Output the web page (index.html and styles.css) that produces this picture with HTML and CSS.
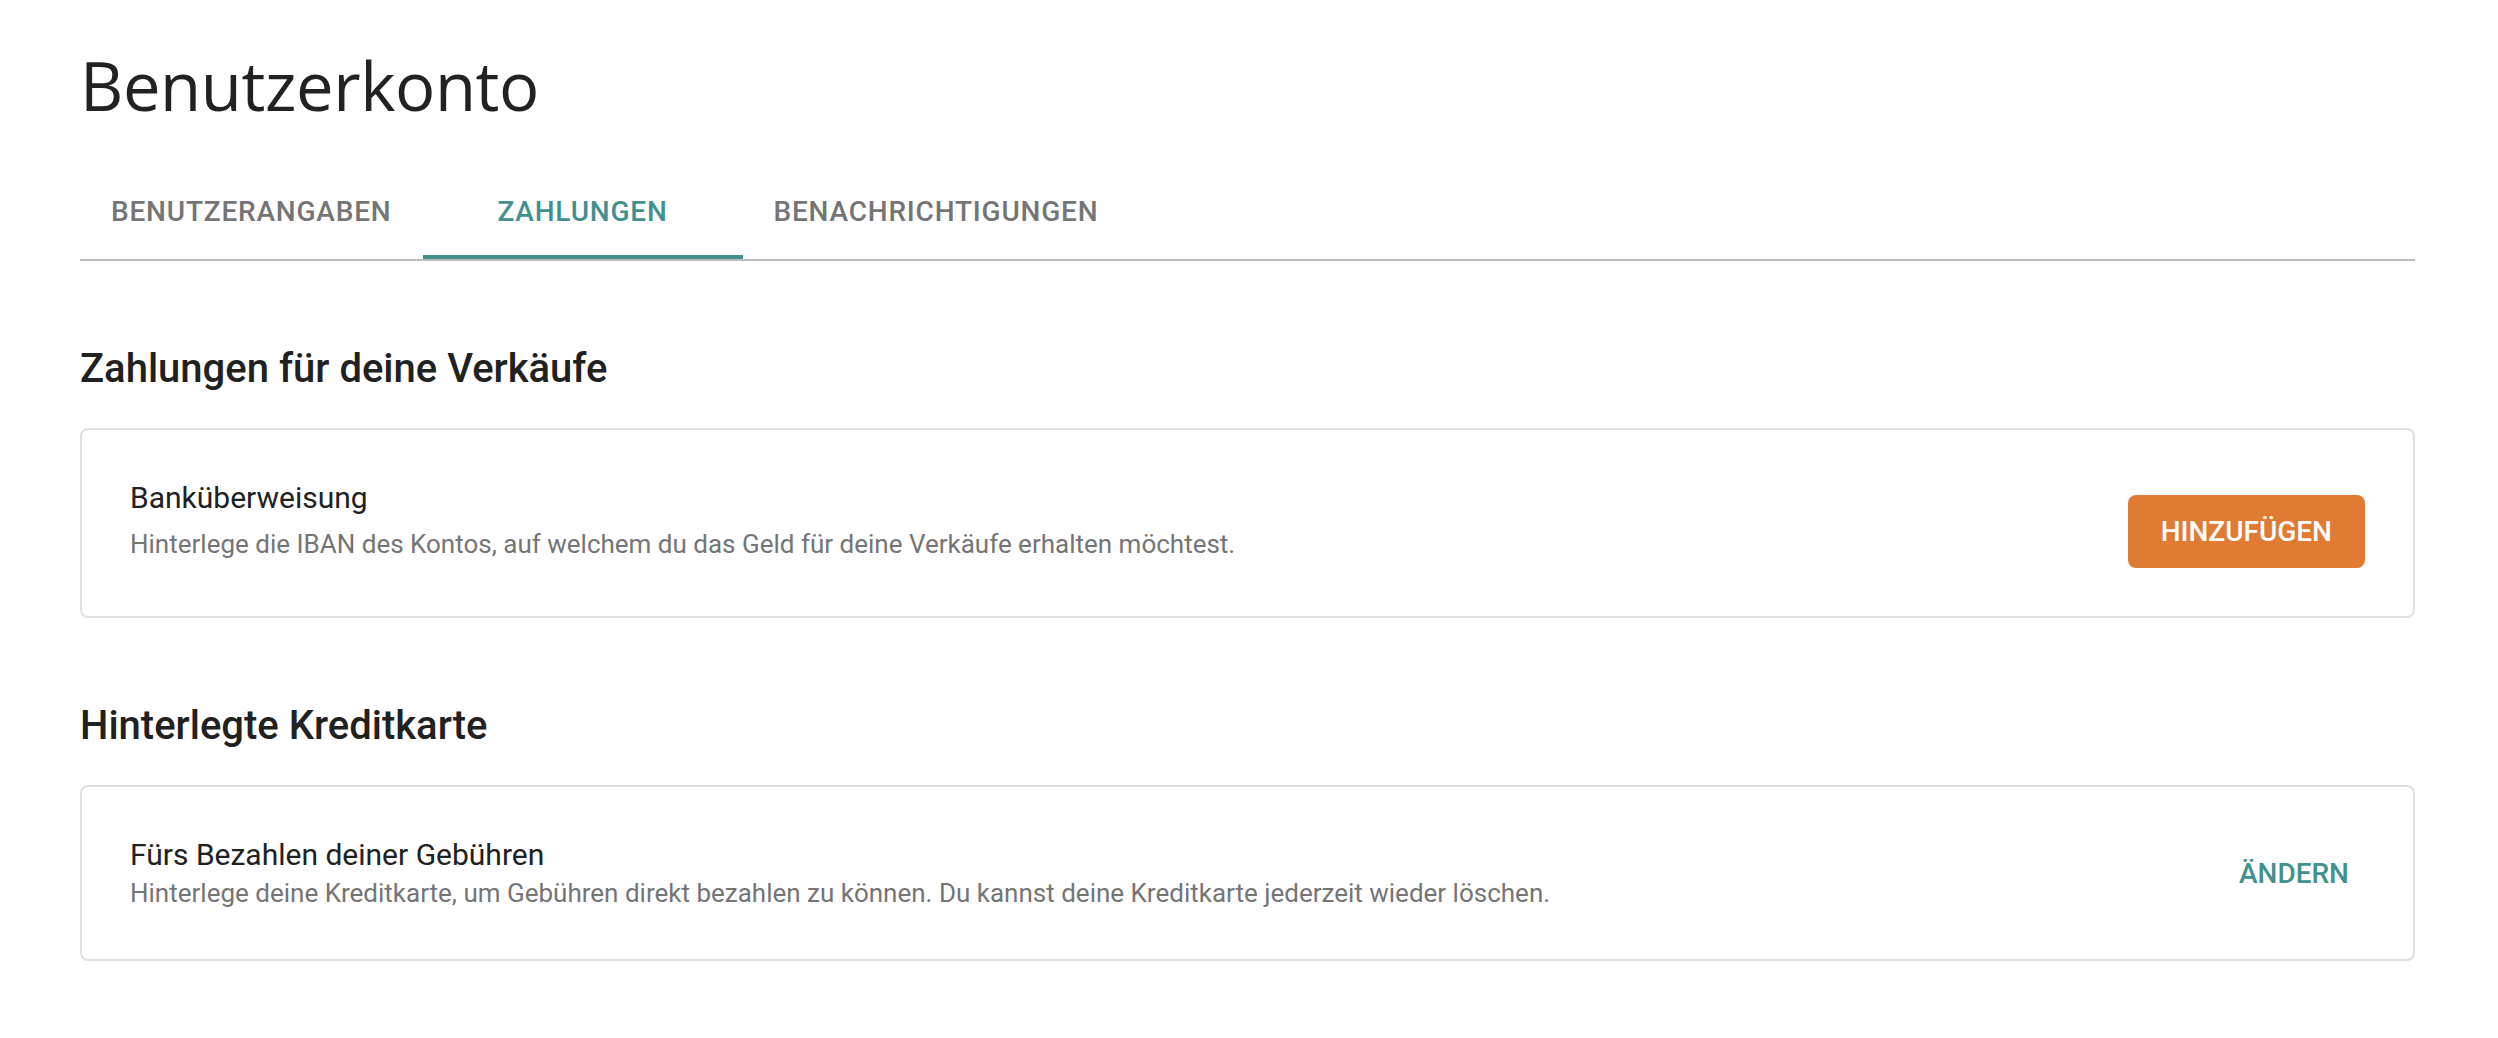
FILE: index.html
```html
<!DOCTYPE html>
<html lang="de">
<head>
    <meta charset="UTF-8">
    <meta name="viewport" content="width=device-width, initial-scale=1.0">
    <title>Benutzerkonto</title>
    <link rel="stylesheet" href="styles.css">
</head>
<body>
    <main class="account">
        <h1 class="account-title">Benutzerkonto</h1>

        <nav class="tabs">
            <a href="#" class="tab">Benutzerangaben</a>
            <a href="#" class="tab active">Zahlungen</a>
            <a href="#" class="tab">Benachrichtigungen</a>
        </nav>

        <section class="section">
            <h2 class="section-title">Zahlungen für deine Verkäufe</h2>
            <div class="card card-bank">
                <div class="card-text">
                    <h3 class="card-title">Banküberweisung</h3>
                    <p class="card-desc">Hinterlege die IBAN des Kontos, auf welchem du das Geld für deine Verkäufe erhalten möchtest.</p>
                </div>
                <button class="btn btn-primary">Hinzufügen</button>
            </div>
        </section>

        <section class="section">
            <h2 class="section-title">Hinterlegte Kreditkarte</h2>
            <div class="card">
                <div class="card-text">
                    <h3 class="card-title">Fürs Bezahlen deiner Gebühren</h3>
                    <p class="card-desc">Hinterlege deine Kreditkarte, um Gebühren direkt bezahlen zu können. Du kannst deine Kreditkarte jederzeit wieder löschen.</p>
                </div>
                <button class="btn btn-text">Ändern</button>
            </div>
        </section>
    </main>
</body>
</html>
```

FILE: styles.css
```css
body {
    margin: 0;
    padding: 0;
    background: #fff;
    font-family: Roboto, 'Liberation Sans', sans-serif;
    color: #212121;
}
.account {
    padding: 45px 83px 60px 80px;
}
.account-title {
    margin: 0;
    font-family: 'Open Sans', 'DejaVu Sans', sans-serif;
    font-weight: 400;
    font-size: 67px;
    line-height: 80px;
    color: #222;
    letter-spacing: -0.4px;
}
.tabs {
    display: flex;
    margin-top: 38px;
    border-bottom: 2px solid #bdbdbd;
}
.tab {
    box-sizing: border-box;
    display: flex;
    align-items: center;
    justify-content: center;
    min-width: 320px;
    height: 96px;
    padding: 4px 31px 0;
    border-bottom: 4px solid transparent;
    font-size: 28px;
    font-weight: 500;
    text-transform: uppercase;
    letter-spacing: 0.8px;
    color: #757575;
    text-decoration: none;
}
.tab.active {
    color: #42918e;
    border-bottom-color: #42918e;
}
.section {
    margin-top: 84px;
}
.section-title {
    margin: 0 0 35px;
    font-size: 40px;
    font-weight: 500;
    line-height: 48px;
    color: #212121;
}
.card {
    display: flex;
    align-items: center;
    justify-content: space-between;
    padding: 48px;
    border: 2px solid #e0e0e0;
    border-radius: 8px;
}
.card-bank {
    align-items: flex-start;
}
.card-bank .card-title {
    margin-bottom: 8px;
}
.card-bank .btn {
    margin-top: 17px;
}
.card-title {
    margin: 0;
    font-size: 30px;
    font-weight: 400;
    line-height: 40px;
    color: #212121;
}
.card-desc {
    margin: 0;
    font-size: 26px;
    line-height: 36px;
    color: #757575;
}
.btn {
    border: none;
    background: none;
    font-family: Roboto, 'Liberation Sans', sans-serif;
    font-size: 28px;
    font-weight: 500;
    text-transform: uppercase;
    letter-spacing: 0;
    cursor: pointer;
}
.btn-primary {
    height: 73px;
    padding: 0 33px;
    border-radius: 8px;
    background-color: #df7b33;
    color: #fff;
}
.btn-text {
    height: 72px;
    padding: 0 16px;
    color: #42918e;
}
```
